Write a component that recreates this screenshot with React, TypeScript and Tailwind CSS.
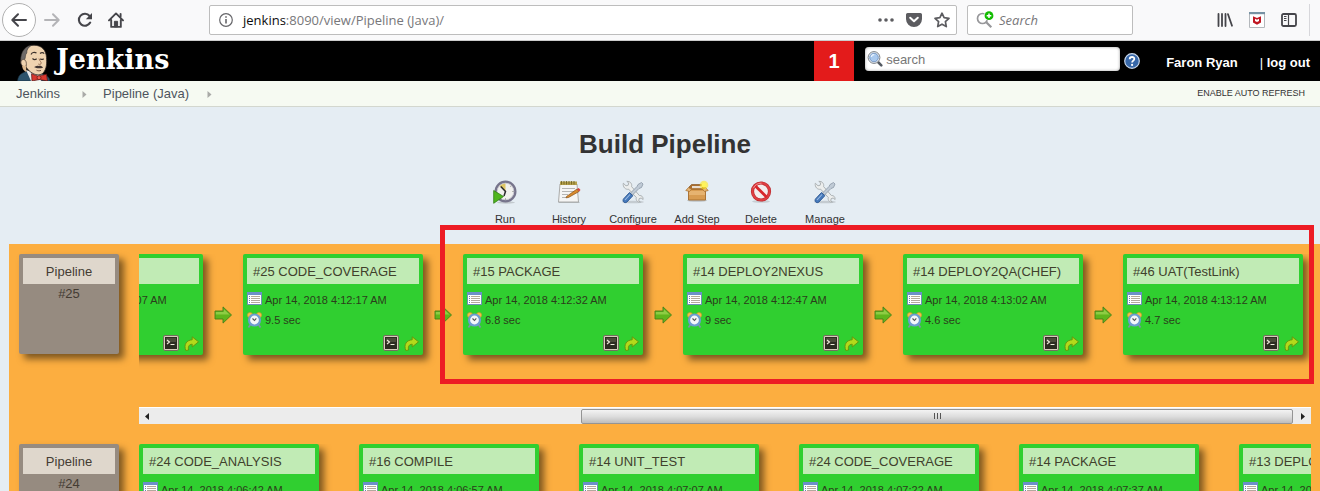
import React from "react";

type Step = { name: string; date: string; duration: string };

const runs: { id: string; align: "start" | "end"; steps: Step[] }[] = [
  {
    id: "#25",
    align: "end",
    steps: [
      { name: "#14 UNIT_TEST", date: "Apr 14, 2018 4:12:07 AM", duration: "7.1 sec" },
      { name: "#25 CODE_COVERAGE", date: "Apr 14, 2018 4:12:17 AM", duration: "9.5 sec" },
      { name: "#15 PACKAGE", date: "Apr 14, 2018 4:12:32 AM", duration: "6.8 sec" },
      { name: "#14 DEPLOY2NEXUS", date: "Apr 14, 2018 4:12:47 AM", duration: "9 sec" },
      { name: "#14 DEPLOY2QA(CHEF)", date: "Apr 14, 2018 4:13:02 AM", duration: "4.6 sec" },
      { name: "#46 UAT(TestLink)", date: "Apr 14, 2018 4:13:12 AM", duration: "4.7 sec" },
    ],
  },
  {
    id: "#24",
    align: "start",
    steps: [
      { name: "#24 CODE_ANALYSIS", date: "Apr 14, 2018 4:06:42 AM", duration: "8 sec" },
      { name: "#16 COMPILE", date: "Apr 14, 2018 4:06:57 AM", duration: "7 sec" },
      { name: "#14 UNIT_TEST", date: "Apr 14, 2018 4:07:07 AM", duration: "7 sec" },
      { name: "#24 CODE_COVERAGE", date: "Apr 14, 2018 4:07:22 AM", duration: "9 sec" },
      { name: "#14 PACKAGE", date: "Apr 14, 2018 4:07:37 AM", duration: "6 sec" },
      { name: "#13 DEPLOY2NEXUS", date: "Apr 14, 2018 4:07:52 AM", duration: "9 sec" },
    ],
  },
];

/* ---------- browser icons ---------- */

const BackIcon = () => (
  <svg width="18" height="16" viewBox="0 0 18 16" fill="none" stroke="#45454a" strokeWidth="2" strokeLinecap="round" strokeLinejoin="round">
    <path d="M16 8H2.5M8 2.3 2.3 8 8 13.7" />
  </svg>
);
const ForwardIcon = () => (
  <svg width="18" height="16" viewBox="0 0 18 16" fill="none" stroke="#b4b4b7" strokeWidth="2" strokeLinecap="round" strokeLinejoin="round">
    <path d="M2 8h13.5M10 2.3 15.7 8 10 13.7" />
  </svg>
);
const ReloadIcon = () => (
  <svg width="16" height="16" viewBox="0 0 16 16" fill="none">
    <path d="M13.2 10.6A6 6 0 1 1 12.6 4" stroke="#45454a" strokeWidth="2.1" strokeLinecap="round" />
    <path d="M15 1v6.2H8.8z" fill="#45454a" />
  </svg>
);
const HomeIcon = () => (
  <svg width="16" height="16" viewBox="0 0 16 16" fill="none" stroke="#45454a" strokeWidth="1.9" strokeLinecap="round" strokeLinejoin="round">
    <path d="M1 8.4 8 1.4l7 7M3.2 8v6.9h9.6V8" />
    <path d="M6.4 14.5V9.3h3.2v5.2z" fill="#45454a" strokeWidth="1" />
    <path d="M12.6 2v2.5" />
  </svg>
);
const InfoIcon = () => (
  <svg width="14" height="14" viewBox="0 0 14 14">
    <circle cx="7" cy="7" r="6.3" fill="none" stroke="#66666a" strokeWidth="1.2" />
    <path d="M6.2 5.9h1.6v4.7H6.2zM6.2 3.2h1.6v1.6H6.2z" fill="#66666a" />
  </svg>
);
const DotsIcon = () => (
  <svg width="16" height="4" viewBox="0 0 16 4" fill="#5c5c60">
    <circle cx="2" cy="2" r="1.8" /><circle cx="8" cy="2" r="1.8" /><circle cx="14" cy="2" r="1.8" />
  </svg>
);
const PocketIcon = () => (
  <svg width="16" height="14" viewBox="0 0 16 14">
    <path d="M1.6 0h12.8A1.6 1.6 0 0 1 16 1.6V6A8 8 0 0 1 0 6V1.6A1.6 1.6 0 0 1 1.6 0z" fill="#5c5c60" />
    <path d="m4.2 4.7 3.8 3.6 3.8-3.6" fill="none" stroke="#fff" strokeWidth="2" strokeLinecap="round" strokeLinejoin="round" />
  </svg>
);
const StarIcon = () => (
  <svg width="16" height="16" viewBox="0 0 16 16" fill="none" stroke="#5c5c60" strokeWidth="1.7" strokeLinejoin="round">
    <path d="m8 1.2 2.1 4.5 4.9.6-3.6 3.4.9 4.9L8 12.2l-4.3 2.4.9-4.9L1 6.3l4.9-.6z" />
  </svg>
);
const AddSearchIcon = () => (
  <svg width="18" height="18" viewBox="0 0 18 18">
    <circle cx="6.5" cy="7.5" r="5" fill="none" stroke="#97979a" strokeWidth="1.7" />
    <path d="m10.3 11.2 5 5" stroke="#97979a" strokeWidth="2.2" />
    <circle cx="13" cy="4.7" r="5" fill="#fff" />
    <circle cx="13" cy="4.7" r="4.4" fill="#12bc00" />
    <path d="M13 2.4V7M10.7 4.7h4.6" stroke="#fff" strokeWidth="1.5" />
  </svg>
);
const LibraryIcon = () => (
  <svg width="16" height="14" viewBox="0 0 16 14" stroke="#45454a" strokeWidth="1.8" strokeLinecap="round">
    <path d="M1.5 1v12M5 1v12M8.5 1v12M11 1.2l4 11.5" />
  </svg>
);
const ShieldIcon = () => (
  <svg width="16" height="16" viewBox="0 0 16 16">
    <path d="M.5.5h15v15H.5z" fill="#fff" stroke="#b4b8bc" />
    <path d="M0 0h16v2.2H0z" fill="#7792a3" />
    <path d="M4 4.3 8 6l4-1.700v6.300L8 12.800l-4-2.200z" fill="#c01722" />
    <path d="M6 6.800 8 7.700l2-.9v2.200L8 10 6 9z" fill="#fff" />
  </svg>
);
const SidebarIcon = () => (
  <svg width="16" height="14" viewBox="0 0 16 14" fill="none" stroke="#45454a">
    <rect x="1" y="1" width="14" height="12" rx="1.5" strokeWidth="1.8" />
    <path d="M7.5 1v12" strokeWidth="1.2" />
    <path d="M3 3.5h2.500M3 5.500h2.500M3 7.500h2.500" strokeWidth="1" />
  </svg>
);

/* ---------- header icons ---------- */

const Butler = () => (
  <svg width="34" height="37" viewBox="0 0 34 37">
    <path d="M.5 37c.3-4 2-6.500 5-8l4-2 16 3c4 1 7 3 7.500 7z" fill="#2c536c" stroke="#14242f" strokeWidth=".6" />
    <path d="m9 26 5 11h10l2-6z" fill="#e9ecee" />
    <path d="M5 15C4.500 7 9 1.200 17 1.200c8 0 12.200 5.300 12.500 12.300.4 6 .2 11-3 15-2.500 3-7 2.800-10.500 1-4-2.200-6.500-5-7.500-8C6 20.500 5 18.500 5 15z" fill="#efd3b0" stroke="#302824" strokeWidth=".8" />
    <path d="M4 20C2.500 11 6 2.500 14.500 1.200 11 3.500 9.500 6 9.800 9c-2 1.800-.8 4.500-2.300 7z" fill="#6f6b69" stroke="#2c2827" strokeWidth=".5" />
    <path d="M4.500 20.500c-1.500-3 .5-5.500 2.500-5 2.200.6 2.700 3.500 2.200 6.500-1.500 1-3.700.8-4.700-1.500z" fill="#efd3b0" stroke="#59493f" strokeWidth=".8" />
    <path d="M5 21.500c.5 3 1 5 4.500 6.500l-.5-6z" fill="#dcb78d" />
    <path d="M14 10.500c1-2 3.300-2.800 5.500-1.500M23 9.500c1.500-1.300 3.200-1 4.200.2" fill="none" stroke="#3a302b" strokeWidth="1.100" />
    <path d="M15.500 14.500c1.300 1.200 3 1.200 4.200.2M23.300 14.700c1 .9 2.400.8 3.400 0" fill="none" stroke="#3a302b" strokeWidth="1.200" />
    <path d="M22 14.500c.3 2.500 3 3.800 2 5.300-.6.800-2 .7-2.800.2" fill="none" stroke="#9a7257" strokeWidth="1" />
    <path d="M17 23c1.500-.3 2.500-1.700 4.500-1 1.500-.6 3.500 0 4.500 1.700-3 .8-6.500.8-9-.7z" fill="#403532" />
    <path d="M19.500 26.200c1.500.7 3 .8 4.500.2" fill="none" stroke="#6a4534" strokeWidth=".9" />
    <path d="m14.500 29.700 6.500 2.500 8.500-2 1 6.800-8-1.500-7.500 1.500z" fill="#d8372f" stroke="#591512" strokeWidth=".7" />
    <circle cx="22" cy="33.700" r="2" fill="#ef5a4c" stroke="#591512" strokeWidth=".7" />
  </svg>
);
const MagnifierIcon = () => (
  <svg width="16" height="16" viewBox="0 0 16 16">
    <path d="m11 11 3.300 3.300" stroke="#555b63" strokeWidth="2.600" strokeLinecap="round" />
    <circle cx="7" cy="6.500" r="5.900" fill="#f2f4f6" stroke="#7b8086" strokeWidth="1" />
    <circle cx="7" cy="6.500" r="4.300" fill="#a9c9ee" stroke="#6c8fbd" strokeWidth=".9" />
    <path d="M4.300 6c.3-1.700 1.500-2.500 3-2.400" fill="none" stroke="#e9f3ff" strokeWidth="1.300" />
  </svg>
);
const HelpIcon = () => (
  <svg width="16" height="16" viewBox="0 0 16 16">
    <circle cx="8" cy="8" r="7.300" fill="#3767a8" stroke="#c8d7eb" strokeWidth="1.200" />
    <path d="M5.700 6.200C5.700 3.200 10.500 3.400 10.300 6c-.1 1.600-2.200 1.700-2.200 3.500" fill="none" stroke="#fff" strokeWidth="1.800" />
    <circle cx="8.100" cy="11.900" r="1.100" fill="#fff" />
  </svg>
);
const Chevron = () => (
  <svg width="5" height="7" viewBox="0 0 5 7"><path d="M.5 0 4.500 3.500.5 7z" fill="#a9aaa7" /></svg>
);

/* ---------- toolbar icons ---------- */

const RunIcon = () => (
  <svg width="24" height="24" viewBox="0 0 24 24">
    <ellipse cx="13" cy="22.500" rx="9" ry="1.200" fill="#000" opacity=".15" />
    <circle cx="12.500" cy="11.500" r="9.800" fill="#f1f1ee" stroke="#77758c" strokeWidth="2.400" />
    <circle cx="12.500" cy="11.500" r="8.300" fill="none" stroke="#c5c5cf" strokeWidth=".8" />
    <path d="M12.500 11.500 6.500 6A8 8 0 0 1 12.500 3.500z" fill="#dfc766" />
    <path d="m7.800 6.500 4.700 5-1.500 4.500" fill="none" stroke="#2c2c2c" strokeWidth="1.500" />
    <path d="M19.500 11.500h1M12.500 18.500v1M17.500 6.500l.7-.7" stroke="#777" />
    <path d="M.7 10.500 10.500 16.500.7 23.300z" fill="#4fb51d" stroke="#2e7d12" strokeWidth=".8" />
  </svg>
);
const HistoryIcon = () => (
  <svg width="24" height="24" viewBox="0 0 24 24">
    <path d="M1.500 22h21v1h-21z" fill="#000" opacity=".2" />
    <path d="M3 4h17l1.500 18H1.500z" fill="#f5f5f4" stroke="#a3a3a0" strokeWidth=".9" />
    <path d="M3 1.500h17V5H3z" fill="#b5a14b" />
    <path d="M4.500 1v3.500M7 1v3.500M9.500 1v3.500M12 1v3.500M14.500 1v3.500M17 1v3.500" stroke="#6b5c20" strokeWidth=".8" />
    <path d="M5 8.500h13M5 11.500h12M5 14.500h6M5 17.500h5" stroke="#b5b5b3" />
    <path d="M9.500 16.500 20 9l2 2.500-10.500 6-2.500.3z" fill="#d98a2c" stroke="#875019" strokeWidth=".7" />
    <path d="m20 9 1.800-1 1.700 2-1.500 1.500z" fill="#d9413c" />
  </svg>
);
const ToolsIcon = () => (
  <svg width="24" height="24" viewBox="0 0 24 24">
    <ellipse cx="12" cy="22" rx="11" ry="1.300" fill="#000" opacity=".14" />
    <path d="M2.300 3.200 5 5.800l2.200-.6.5-2.300L5.800 1.400C9 1 11.300 3.500 10.600 6.600l7.800 8.900c2.200-.3 4 1.500 3.700 4l-2-1.500-2 .7-.3 2.200 1.500 1.200c-3 .4-4.700-2-4-4.600L7.700 9.200C4.500 10 1.600 7 2.300 3.200z" fill="#eceeed" stroke="#a6abae" strokeWidth=".9" />
    <path d="M20.500 2.500 22 4l-1.500 3.500-2.500 1-6.500 6.500-2-2 6.500-6.500 1-2z" fill="#c0cbd6" stroke="#8997a5" strokeWidth=".8" />
    <path d="m8.500 12.500 3.300 3.300-6 6.400c-2.500 1.500-4.800-1-3.300-3.300z" fill="#4679ba" stroke="#2d5791" strokeWidth=".9" />
    <path d="M9 14.500 4 20" stroke="#9cbde6" strokeWidth="1.100" />
  </svg>
);
const BoxIcon = () => (
  <svg width="24" height="24" viewBox="0 0 24 24">
    <ellipse cx="12" cy="20.500" rx="10" ry="1.300" fill="#000" opacity=".18" />
    <path d="M4 7 6.500 4.500h11L20 7l-.5 3h-15z" fill="#a86e30" stroke="#8b5822" strokeWidth=".7" />
    <path d="M7 6h10v2.500H7z" fill="#e8ddd0" />
    <path d="M3.500 9.500h17V20h-17z" fill="#d89c51" stroke="#a56b2a" strokeWidth=".9" />
    <path d="M4 11h16v4H4z" fill="#edbd7d" opacity=".7" />
    <path d="M3.500 7.500.8 10.500l3.700 1L6.500 9.300h11l2 2.200 3.700-1-2.700-3-2 1.200h-13z" fill="#e5b576" stroke="#a56b2a" strokeWidth=".7" />
    <circle cx="19" cy="5" r="4.300" fill="#ffe81f" opacity=".6" />
    <circle cx="19" cy="5" r="2.500" fill="#fff45a" />
  </svg>
);
const DeleteIcon = () => (
  <svg width="24" height="24" viewBox="0 0 24 24">
    <ellipse cx="12" cy="21.500" rx="9" ry="1.300" fill="#000" opacity=".13" />
    <circle cx="12" cy="11.500" r="8.500" fill="#f3eded" stroke="#b92a2e" strokeWidth="3.200" />
    <circle cx="12" cy="11.500" r="8.500" fill="none" stroke="#df3f42" strokeWidth="2" />
    <path d="m6.200 5.700 11.600 11.600" stroke="#d8262b" strokeWidth="2.800" />
    <path d="M4.500 8C6 4.800 9 3.200 12.500 3.200" fill="none" stroke="#f08b8b" />
  </svg>
);

/* ---------- card icons ---------- */

const CalendarIcon = () => (
  <svg width="15" height="16" viewBox="0 0 15 16">
    <path d="M.5.5h14v12H.5z" fill="#fff" stroke="#718fb9" />
    <path d="M0 0h15v3H0z" fill="#6d8fca" />
    <path d="M2 4.500h1M2 6.500h1M2 8.500h1M2 10.500h1" stroke="#6687ae" />
    <path d="M4 4.500h9M4 6.500h9M4 8.500h9M4 10.500h9" stroke="#b3a99c" />
  </svg>
);
const ClockIcon = () => (
  <svg width="15" height="16" viewBox="0 0 15 16">
    <path d="m3.500 12.500-2 3M11.500 12.500l2 3" stroke="#7d8fae" strokeWidth="1.600" />
    <circle cx="3" cy="3" r="2.600" fill="#f3c145" stroke="#c9932b" strokeWidth=".6" />
    <circle cx="12" cy="3" r="2.600" fill="#f3c145" stroke="#c9932b" strokeWidth=".6" />
    <circle cx="7.500" cy="8" r="5.500" fill="#f4f7fa" stroke="#6d9bd0" strokeWidth="2.200" />
    <path d="m5.500 6.500 2 2 1.800-2.200" fill="none" stroke="#555" strokeWidth="1.100" />
  </svg>
);
const TerminalIcon = () => (
  <svg width="16" height="16" viewBox="0 0 16 16">
    <rect x=".5" y=".5" width="15" height="15" rx="1.500" fill="#d6ceb9" stroke="#756e5e" />
    <path d="M2 2h12v12H2z" fill="#2c2b20" />
    <path d="M3 3h10v4H3z" fill="#4a4a39" />
    <path d="m4 5 2.500 2L4 9M7.500 9.500h4" fill="none" stroke="#f0eedd" strokeWidth="1.100" />
  </svg>
);
const RerunIcon = () => (
  <svg width="15" height="15" viewBox="0 0 15 15">
    <path d="M1.800 14.500C-.5 8.500 2.500 4.200 8.200 3.800V.8l6.300 5-6.300 5.200V8.200C4.800 8.200 3.800 11 4.600 14z" fill="#b4d91b" stroke="#63920c" strokeWidth=".9" strokeLinejoin="round" />
  </svg>
);
const NextIcon = () => (
  <svg width="18" height="18" viewBox="0 0 18 18">
    <path d="M1 5h8V.9L17.500 9 9 17.100V13H1z" fill="#61b51c" stroke="#467e1b" strokeWidth=".9" />
    <path d="M1.800 6h8V3.200L15.500 8.500H1.800z" fill="#a1d655" opacity=".7" />
  </svg>
);

const tools: { label: string; Icon: () => React.JSX.Element }[] = [
  { label: "Run", Icon: RunIcon },
  { label: "History", Icon: HistoryIcon },
  { label: "Configure", Icon: ToolsIcon },
  { label: "Add Step", Icon: BoxIcon },
  { label: "Delete", Icon: DeleteIcon },
  { label: "Manage", Icon: ToolsIcon },
];

function BrowserBar() {
  return (
    <div className="flex h-[41px] shrink-0 items-center border-b border-[#cccccc] bg-[#f9f9fa] font-['Open_Sans','Noto_Sans',sans-serif]">
      <div className="flex w-[209px] shrink-0 items-center">
        <button aria-label="Back" className="ml-0.5 flex size-[34px] items-center justify-center rounded-full border border-[#b1b1b1] bg-white"><BackIcon /></button>
        <button aria-label="Forward" className="ml-[7px]"><ForwardIcon /></button>
        <button aria-label="Reload" className="ml-4"><ReloadIcon /></button>
        <button aria-label="Home" className="ml-[15px]"><HomeIcon /></button>
      </div>
      <div className="flex h-[30px] min-w-0 grow items-center rounded-xs border border-[#bdbdbd] bg-white pr-1.5 pl-[9px]">
        <InfoIcon />
        <label className="relative ml-2.5 flex h-full min-w-0 grow items-center pt-0.5 text-[13px] text-[#77777a]">
          <span className="whitespace-nowrap"><span className="text-[#0c0c0d]">jenkins</span>:8090/view/Pipeline (Java)/</span>
          <input aria-label="Address" className="absolute inset-0 bg-transparent outline-none" />
        </label>
        <button aria-label="Page actions"><DotsIcon /></button>
        <button aria-label="Save to Pocket" className="ml-3"><PocketIcon /></button>
        <button aria-label="Bookmark" className="ml-3"><StarIcon /></button>
      </div>
      <label className="ml-2.5 flex h-[30px] w-[166px] shrink-0 items-center gap-[5px] rounded-xs border border-[#bdbdbd] bg-white pl-2">
        <AddSearchIcon />
        <input aria-label="Web search" placeholder="Search" className="w-24 bg-transparent pt-0.5 text-[13px] italic outline-none placeholder:text-[#77777a]" />
      </label>
      <div className="flex w-[187px] shrink-0 items-center justify-end gap-4">
        <button aria-label="Library"><LibraryIcon /></button>
        <button aria-label="Shield"><ShieldIcon /></button>
        <button aria-label="Sidebars"><SidebarIcon /></button>
        <span className="mr-2.5 -ml-1 h-8 w-px bg-[#d7d7db]" />
      </div>
    </div>
  );
}

function JenkinsHeader() {
  return (
    <header className="flex h-10 shrink-0 items-center bg-black pr-2.5 text-white">
      <a href="#home" className="flex h-full grow items-end pl-[17px]">
        <Butler />
        <span className="ml-[5px] self-start font-['DejaVu_Serif',serif] text-[27px] leading-[38px] font-bold">Jenkins</span>
      </a>
      <a href="#alerts" className="flex h-full w-10 items-center justify-center bg-[#e31b1b] text-xl font-bold">1</a>
      <label className="mt-1.5 ml-[11px] flex h-6 w-[255px] items-center gap-[3px] self-start rounded-sm bg-white pl-0.5 shadow-[inset_0_0_3px_#999]">
        <MagnifierIcon />
        <input aria-label="Search" placeholder="search" className="w-52 bg-transparent pt-px text-[13px] text-black outline-none placeholder:text-[#777777]" />
      </label>
      <a href="#help" aria-label="Help" className="ml-1"><HelpIcon /></a>
      <a href="#user" className="ml-[26px] pt-1 text-[13px] font-bold">Faron Ryan</a>
      <span className="ml-[22px] pt-1 text-[13px]">| <a href="#logout" className="font-bold">log out</a></span>
    </header>
  );
}

function Breadcrumbs() {
  return (
    <nav className="flex h-[26px] shrink-0 items-center border-b border-[#d3d7cf] bg-[#f6faf2] pr-[15px] pl-4 pt-px text-[13px] text-[#4d545d]">
      <a href="#jenkins">Jenkins</a>
      <span className="mr-4 ml-[22px]"><Chevron /></span>
      <a href="#pipeline">Pipeline (Java)</a>
      <span className="ml-[18px]"><Chevron /></span>
      <a href="#refresh" className="ml-auto text-[9px] text-[#333333]">ENABLE AUTO REFRESH</a>
    </nav>
  );
}

function StepCard({ step }: { step: Step }) {
  return (
    <article className="flex h-[101px] w-[180px] shrink-0 flex-col rounded-xs bg-[#30cf30] p-1 shadow-[5px_5px_7px_rgba(0,0,0,0.5)]">
      <h2 className="h-[26px] bg-[#c1ebb5] pl-1.5 text-[13px] leading-[27px] whitespace-nowrap text-[#40402c]">{step.name}</h2>
      <p className="mt-1.5 flex h-5 items-center gap-[3px] text-[11px] whitespace-nowrap text-[#2b3d1b]"><CalendarIcon /><span className="pt-px">{step.date}</span></p>
      <p className="flex h-5 items-center gap-[3px] text-[11px] text-[#2b3d1b]"><ClockIcon /><span className="pt-px">{step.duration}</span></p>
      <div className="mt-auto flex items-center justify-end gap-[5px]">
        <button aria-label="Console"><TerminalIcon /></button>
        <button aria-label="Re-run"><RerunIcon /></button>
      </div>
    </article>
  );
}

function ScrollBar() {
  return (
    <div className="mt-auto flex h-[17px] items-center border-t border-white bg-[#ececec]">
      <button aria-label="Scroll left" className="flex w-4 justify-center"><svg width="4" height="7" viewBox="0 0 4 7"><path d="M4 0v7L0 3.5z" fill="#222" /></svg></button>
      <div className="flex grow justify-end pr-0.5">
        <div className="flex h-[15px] w-[62.6%] items-center justify-center gap-px rounded-xs border border-[#949494] bg-linear-to-b from-[#f3f3f3] via-[#dddddd] to-[#bdbdbd]">
          <span className="h-1.5 w-0.5 border-r border-[#555555]" />
          <span className="h-1.5 w-0.5 border-r border-[#555555]" />
          <span className="h-1.5 w-0.5 border-r border-[#555555]" />
        </div>
      </div>
      <button aria-label="Scroll right" className="flex w-4 justify-center"><svg width="4" height="7" viewBox="0 0 4 7"><path d="M0 0v7l4-3.5z" fill="#222" /></svg></button>
    </div>
  );
}

function PipelineRow({ run }: { run: (typeof runs)[number] }) {
  return (
    <section className="flex h-[170px] shrink-0 pr-[9px] pl-2.5">
      <div className="h-[100px] w-[100px] shrink-0 rounded-xs bg-[#968b80] p-1 text-center text-[13px] text-[#443c33] shadow-[5px_5px_7px_rgba(0,0,0,0.5)]">
        <div className="h-[26px] bg-[#dfd7cc] leading-[27px]">Pipeline</div>
        <div className="leading-5">{run.id}</div>
      </div>
      <div className="ml-5 flex min-w-0 grow flex-col">
        <div className={run.align === "end" ? "flex h-[140px] justify-end overflow-hidden pr-2" : "flex h-[140px] overflow-hidden"}>
          {run.steps.map((step, i) => (
            <React.Fragment key={step.name}>
              {i > 0 && <div className="flex h-[122px] w-10 shrink-0 items-center justify-center"><NextIcon /></div>}
              <StepCard step={step} />
            </React.Fragment>
          ))}
        </div>
        <ScrollBar />
      </div>
    </section>
  );
}

export default function App() {
  return (
    <div className="flex h-screen flex-col overflow-hidden bg-[#e5edf3] font-['Liberation_Sans',Arial,sans-serif]">
      <BrowserBar />
      <JenkinsHeader />
      <Breadcrumbs />
      <main className="flex grow flex-col pl-[9px]">
        <h1 className="mt-[21px] pl-px text-center text-[26px] leading-8 font-bold text-[#333333]">Build Pipeline</h1>
        <div className="mt-5 flex justify-center pl-px">
          {tools.map(({ label, Icon }) => (
            <button key={label} className="flex w-16 flex-col items-center gap-[7px] text-[11px] leading-4 whitespace-nowrap text-[#333333]">
              <Icon />
              {label}
            </button>
          ))}
        </div>
        <div className="relative mt-[17px] flex flex-col gap-5 bg-[#fcae40] pt-2.5">
          {runs.map((run) => (
            <PipelineRow key={run.id} run={run} />
          ))}
          <div className="pointer-events-none absolute -top-[19px] right-1.5 h-[159px] w-[874px] border-5 border-[#ed1c24]" />
        </div>
      </main>
    </div>
  );
}
